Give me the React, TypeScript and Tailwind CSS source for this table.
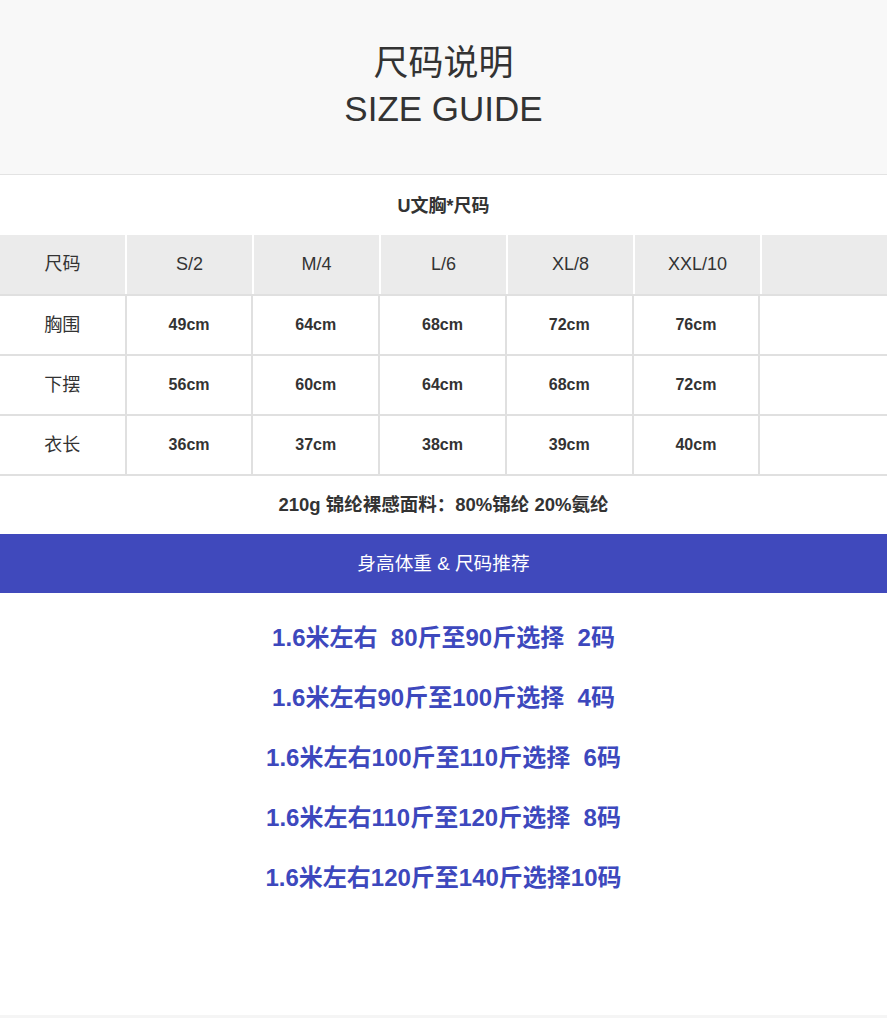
import React from 'react';

const FONT = '"Liberation Sans", "Noto Sans CJK SC", sans-serif';

const sizes = ['S/2', 'M/4', 'L/6', 'XL/8', 'XXL/10', ''];

const rows = [
  { label: '胸围', values: ['49cm', '64cm', '68cm', '72cm', '76cm', ''] },
  { label: '下摆', values: ['56cm', '60cm', '64cm', '68cm', '72cm', ''] },
  { label: '衣长', values: ['36cm', '37cm', '38cm', '39cm', '40cm', ''] },
];

const recommendations = [
  '1.6米左右  80斤至90斤选择  2码',
  '1.6米左右90斤至100斤选择  4码',
  '1.6米左右100斤至110斤选择  6码',
  '1.6米左右110斤至120斤选择  8码',
  '1.6米左右120斤至140斤选择10码',
];

const App = () => {
  return (
    <div className="w-[887px] h-[1018px] bg-white text-[#333] flex flex-col" style={{ fontFamily: FONT }}>
      {/* Title block */}
      <div className="h-[175px] bg-[#f8f8f8] border-b border-[#e3e3e3] flex flex-col items-center pt-[40px]">
        <div className="text-[35px] leading-[46px]">尺码说明</div>
        <div className="text-[35px] leading-[46px]">SIZE GUIDE</div>
      </div>

      <div className="h-[60px] flex items-center justify-center text-[18px] font-bold pt-[2px]">U文胸*尺码</div>

      {/* Size table */}
      <div className="grid grid-cols-7 gap-x-[2px] bg-white">
        <div className="h-[59px] bg-[#ebebeb] flex items-center justify-center text-[18px]">尺码</div>
        {sizes.map((s, i) => (
          <div key={i} className="h-[59px] bg-[#ebebeb] flex items-center justify-center text-[18px]">
            {s}
          </div>
        ))}
      </div>
      <div className="border-t-2 border-[#e0e0e0]">
        {rows.map((row) => (
          <div key={row.label} className="grid grid-cols-7 border-b-2 border-[#e0e0e0]">
            <div className="h-[58px] flex items-center justify-center text-[18px] border-r-2 border-[#e0e0e0]">
              {row.label}
            </div>
            {row.values.map((v, i) => (
              <div
                key={i}
                className={`h-[58px] flex items-center justify-center text-[16px] font-bold ${
                  i < 5 ? 'border-r-2 border-[#e0e0e0]' : ''
                }`}
              >
                {v}
              </div>
            ))}
          </div>
        ))}
      </div>

      <div className="h-[58px] flex items-center justify-center text-[18.5px] font-bold">
        210g 锦纶裸感面料：80%锦纶 20%氨纶
      </div>

      <div className="h-[59px] bg-[#4049bc] flex items-center justify-center text-[18.7px] text-white pt-[2px]">
        身高体重 &amp; 尺码推荐
      </div>

      {/* Recommendations */}
      <div className="flex-1 flex flex-col items-center pt-[15px]">
        {recommendations.map((r) => (
          <div key={r} className="h-[60px] flex items-center text-[24px] font-bold text-[#3d48bd] whitespace-pre">
            {r}
          </div>
        ))}
      </div>

      <div className="h-[3px] bg-[#f5f5f5]" />
    </div>
  );
};

export default App;
